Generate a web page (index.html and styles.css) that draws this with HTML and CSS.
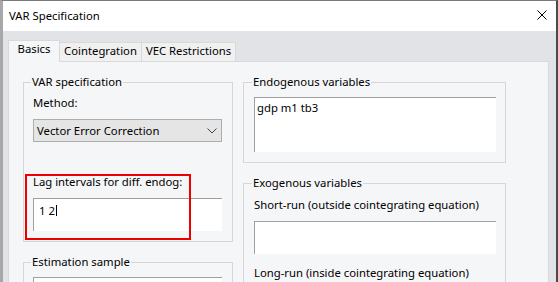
FILE: index.html
```html
<!DOCTYPE html>
<html>
<head>
<meta charset="utf-8">
<link rel="stylesheet" href="styles.css">
</head>
<body>
<div class="window">
  <div class="titlebar">
    <span class="title">VAR Specification</span>
    <svg class="close" width="10" height="10" viewBox="0 0 10 10"><path d="M0.5 0.5L9.5 9.5M9.5 0.5L0.5 9.5" stroke="#000" stroke-width="1" fill="none"/></svg>
  </div>
  <div class="client">
    <div class="tabs">
      <div class="tab active tab-basics">Basics</div>
      <div class="tab tab-coint">Cointegration</div>
      <div class="tab tab-vec">VEC Restrictions</div>
    </div>
    <div class="panel">
      <div class="col col-left">
        <fieldset class="group g-var">
          <legend>VAR specification</legend>
          <div class="label">Method:</div>
          <div class="select"><span>Vector Error Correction</span><svg width="10" height="6" viewBox="0 0 10 6"><path d="M0.5 0.5L5 5L9.5 0.5" stroke="#444" stroke-width="1" fill="none"/></svg></div>
          <div class="lag">
            <div class="label">Lag intervals for diff. endog:</div>
            <div class="textbox tb-lag">1 2<span class="caret"></span></div>
            <div class="highlight"></div>
          </div>
        </fieldset>
        <fieldset class="group g-sample">
          <legend>Estimation sample</legend>
          <div class="textbox tb-sample"></div>
        </fieldset>
      </div>
      <div class="col col-right">
        <fieldset class="group g-endo">
          <legend>Endogenous variables</legend>
          <div class="textbox tb-endo">gdp m1 tb3</div>
        </fieldset>
        <fieldset class="group g-exo">
          <legend>Exogenous variables</legend>
          <div class="label">Short-run (outside cointegrating equation)</div>
          <div class="textbox tb-short"></div>
          <div class="label label-long">Long-run (inside cointegrating equation)</div>
        </fieldset>
      </div>
    </div>
  </div>
</div>
</body>
</html>
```

FILE: styles.css
```css
* { box-sizing: border-box; }
html, body { margin: 0; padding: 0; }
body {
  width: 558px;
  height: 282px;
  overflow: hidden;
  font-family: "Noto Sans", sans-serif;
  font-size: 11.3px;
  color: #000;
  background: #e2e3e6;
}
.window {
  width: 558px;
  height: 282px;
  border-top: 1px solid #7a7a7a;
  border-left: 3px solid #a8a8a8;
  border-right: 2px solid #4a4a4a;
  display: flex;
  flex-direction: column;
  background: #e2e3e6;
  overflow: hidden;
}
.titlebar {
  height: 30px;
  flex: none;
  background: #fff;
  display: flex;
  align-items: flex-start;
  justify-content: space-between;
  padding: 0 9px 0 6px;
}
.title { line-height: 16px; margin-top: 7px; }
.close { margin-top: 9px; display: block; }
.client {
  flex: 1;
  padding: 9px 0 0 5px;
  display: flex;
  flex-direction: column;
}
.tabs {
  display: flex;
  align-items: flex-start;
  height: 22px;
  margin-bottom: -1px;
  position: relative;
  z-index: 1;
}
.tab {
  height: 19px;
  margin-top: 2px;
  border: 1px solid #d9d9d9;
  border-bottom: none;
  background: #f0f0f0;
  line-height: 16px;
  text-align: center;
}
.tab.active {
  height: 22px;
  margin-top: 0;
  background: #f5f6f8;
  position: relative;
  z-index: 2;
}
.tab-basics { width: 52px; }
.tab-coint { width: 83px; margin-left: -1px; }
.tab-vec { width: 95px; margin-left: -1px; }
.panel {
  width: 541px;
  flex: 1;
  background: #f5f6f8;
  border: 1px solid #d9d9d9;
  display: flex;
  gap: 10px;
  padding: 12px 0 0 14px;
}
.col {
  display: flex;
  flex-direction: column;
  gap: 12px;
}
.col-left { width: 210px; }
.col-right { width: 263px; }
.group {
  margin: 0;
  border: 1px solid #d6d6d6;
  min-width: 0;
  position: relative;
}
.group legend {
  padding: 0 1px;
  margin-left: -2px;
  line-height: 16px;
}
.label { line-height: 16px; white-space: nowrap; }
.g-var { padding: 5px 10px 10px 9px; }
.g-sample { padding: 7px 10px 10px 9px; }
.g-endo { padding: 7px 9px 10px 10px; }
.g-exo { padding: 6px 9px 10px 10px; }
.select {
  margin-top: 8px;
  height: 23px;
  background: #e5e5e5;
  border: 1px solid #adadad;
  display: flex;
  align-items: center;
  justify-content: space-between;
  padding: 0 4px 0 3px;
  line-height: 21px;
}
.select svg { display: block; margin-top: 1px; }
.lag { position: relative; margin-top: 32px; }
.textbox {
  background: #fff;
  border-top: 1px solid #a0a0a0;
  border-left: 1px solid #a0a0a0;
  height: 33px;
  line-height: 16px;
}
.lag .textbox { margin-top: 8px; }
.tb-lag { padding: 4px 0 0 5px; }
.caret {
  display: inline-block;
  width: 1px;
  height: 11px;
  background: #000;
  margin-left: 1px;
  vertical-align: -1px;
}
.tb-endo { height: 55px; padding: 2px 0 0 2px; }
.tb-short { margin-top: 8px; }
.label-long { margin-top: 11px; }
.highlight {
  position: absolute;
  left: -8px;
  top: 0;
  width: 166px;
  height: 66px;
  border: 2px solid #ee0000;
}
```
